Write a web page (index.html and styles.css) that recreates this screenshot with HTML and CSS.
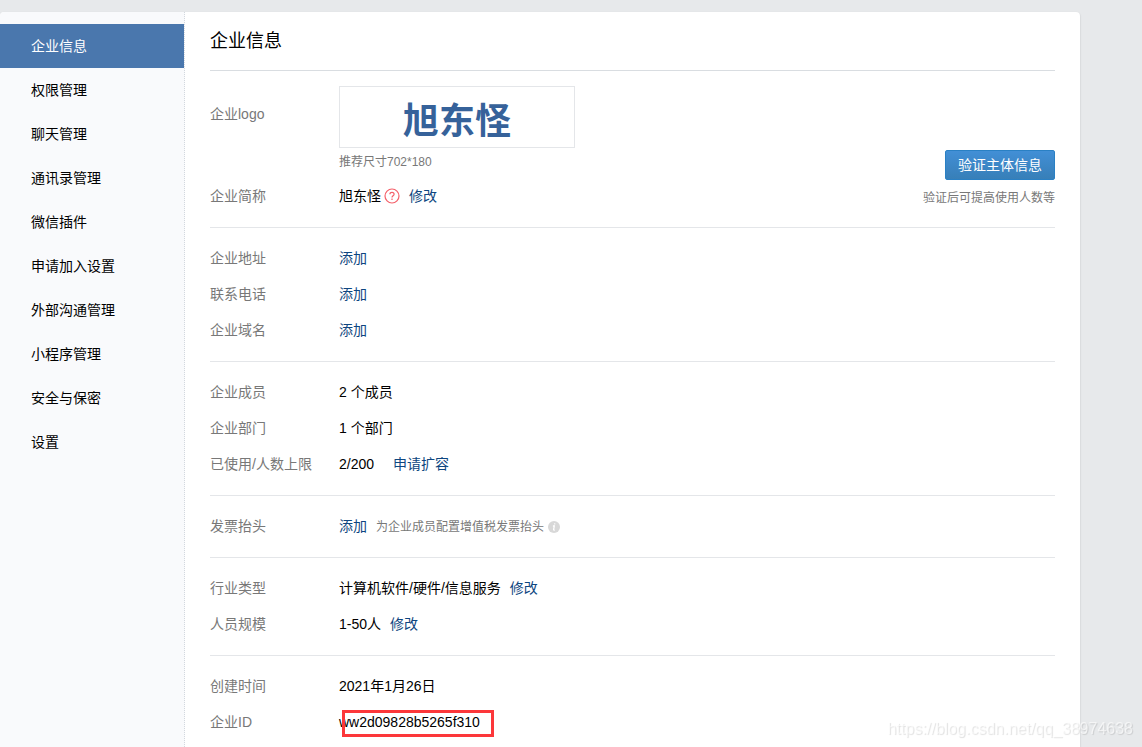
FILE: index.html
```html
<!DOCTYPE html>
<html lang="zh-CN">
<head>
<meta charset="utf-8">
<title>企业信息</title>
<link rel="stylesheet" href="styles.css">
</head>
<body>
<div class="card">
  <nav class="side">
    <a class="side-link side-link-active" href="#">企业信息</a>
    <a class="side-link" href="#">权限管理</a>
    <a class="side-link" href="#">聊天管理</a>
    <a class="side-link" href="#">通讯录管理</a>
    <a class="side-link" href="#">微信插件</a>
    <a class="side-link" href="#">申请加入设置</a>
    <a class="side-link" href="#">外部沟通管理</a>
    <a class="side-link" href="#">小程序管理</a>
    <a class="side-link" href="#">安全与保密</a>
    <a class="side-link" href="#">设置</a>
  </nav>
  <main class="main">
    <h1 class="title">企业信息</h1>
    <section class="group group-profile">
      <dl class="rows">
        <div class="row row-logo">
          <dt class="label">企业logo</dt>
          <dd class="value">
            <div class="logo">旭东怪</div>
            <p class="logo-hint">推荐尺寸702*180</p>
          </dd>
        </div>
        <div class="row">
          <dt class="label">企业简称</dt>
          <dd class="value value-line">
            <span>旭东怪</span>
            <svg class="help" viewBox="0 0 16 16" aria-hidden="true"><circle cx="8" cy="8" r="7"/><path d="M5.9 6.3c0-1.3.9-2 2.1-2s2.1.8 2.1 1.9c0 1.5-2.1 1.6-2.1 3.2"/><path d="M8 10.6v1.3"/></svg>
            <a class="link" href="#">修改</a>
          </dd>
        </div>
      </dl>
      <div class="verify">
        <button class="verify-button" type="button">验证主体信息</button>
        <p class="verify-hint">验证后可提高使用人数等</p>
      </div>
    </section>
    <section class="group">
      <dl class="rows">
        <div class="row"><dt class="label">企业地址</dt><dd class="value"><a class="link" href="#">添加</a></dd></div>
        <div class="row"><dt class="label">联系电话</dt><dd class="value"><a class="link" href="#">添加</a></dd></div>
        <div class="row"><dt class="label">企业域名</dt><dd class="value"><a class="link" href="#">添加</a></dd></div>
      </dl>
    </section>
    <section class="group">
      <dl class="rows">
        <div class="row"><dt class="label">企业成员</dt><dd class="value">2 个成员</dd></div>
        <div class="row"><dt class="label">企业部门</dt><dd class="value">1 个部门</dd></div>
        <div class="row"><dt class="label">已使用/人数上限</dt><dd class="value value-line value-wide"><span>2/200</span><a class="link" href="#">申请扩容</a></dd></div>
      </dl>
    </section>
    <section class="group">
      <dl class="rows">
        <div class="row">
          <dt class="label">发票抬头</dt>
          <dd class="value value-line">
            <a class="link" href="#">添加</a>
            <span class="note">为企业成员配置增值税发票抬头<svg class="info" viewBox="0 0 12 12" aria-hidden="true"><circle cx="6" cy="6" r="6"/><path d="M6.8 2.4l-.2 1M4.9 5h1.4l-.7 3.6c0 .5.5.5 1.1.2"/></svg></span>
          </dd>
        </div>
      </dl>
    </section>
    <section class="group">
      <dl class="rows">
        <div class="row"><dt class="label">行业类型</dt><dd class="value value-line"><span>计算机软件/硬件/信息服务</span><a class="link" href="#">修改</a></dd></div>
        <div class="row"><dt class="label">人员规模</dt><dd class="value value-line"><span>1-50人</span><a class="link" href="#">修改</a></dd></div>
      </dl>
    </section>
    <section class="group group-last">
      <dl class="rows">
        <div class="row"><dt class="label">创建时间</dt><dd class="value">2021年1月26日</dd></div>
        <div class="row"><dt class="label">企业ID</dt><dd class="value"><span class="corp-id">ww2d09828b5265f310</span></dd></div>
      </dl>
    </section>
  </main>
</div>
<div class="watermark">https://blog.csdn.net/qq_38974638</div>
</body>
</html>
```
FILE: styles.css
```css
* {
  box-sizing: border-box;
}

body {
  margin: 0;
  padding: 12px 62px 0 0;
  background: #e7e9eb;
  color: #000;
  font: 14px/36px "Liberation Sans", "Noto Sans CJK SC", sans-serif;
}

h1, p, dl, dd {
  margin: 0;
}

a {
  text-decoration: none;
}

.card {
  display: flex;
  min-height: calc(100vh - 12px);
  background: #fff;
  border-radius: 4px 4px 0 0;
  box-shadow: 0 1px 2px rgba(0, 0, 0, 0.2);
}

.side {
  flex: 0 0 185px;
  padding-top: 12px;
  background: #f9fafc;
  border-right: 1px dotted #d3d8de;
  border-radius: 4px 0 0 0;
}

.side-link {
  display: block;
  padding-left: 31px;
  color: #000;
  line-height: 44px;
}

.side-link-active {
  background: #4a77ad;
  color: #fff;
}

.main {
  flex: 1;
  min-width: 0;
  padding: 0 25px;
}

.title {
  border-bottom: 1px solid #d9dde1;
  font-size: 18px;
  font-weight: 400;
  line-height: 58px;
}

.group {
  display: flex;
  padding: 12px 0 13px;
  border-bottom: 1px solid #e4e6e9;
}

.group-profile {
  padding-top: 15px;
}

.group-last {
  padding-bottom: 0;
  border-bottom: 0;
}

.rows {
  flex: 1;
}

.row {
  display: flex;
}

.label {
  flex: 0 0 129px;
  color: #787878;
}

.row-logo .label {
  line-height: 56px;
}

.value-line {
  display: flex;
  align-items: center;
  gap: 9px;
}

.value-wide {
  gap: 19px;
}

.link {
  color: #0e4680;
}

.logo {
  width: 236px;
  height: 62px;
  padding-top: 5px;
  border: 1px solid #e4e6e9;
  color: #36629a;
  font-size: 36px;
  font-weight: 700;
  line-height: 60px;
  text-align: center;
}

.logo-hint {
  padding-bottom: 2px;
  color: #787878;
  font-size: 12px;
  line-height: 28px;
}

.help {
  width: 16px;
  height: 16px;
  margin-left: -6px;
  fill: none;
  stroke: #f4606a;
  stroke-width: 1.2;
}

.note {
  display: flex;
  align-items: center;
  gap: 4px;
  padding-top: 2px;
  color: #787878;
  font-size: 12px;
  line-height: 34px;
}

.info {
  width: 12px;
  height: 12px;
  fill: #d8d8d8;
}

.info path {
  fill: none;
  stroke: #fff;
  stroke-width: 1.3;
}

.verify {
  display: flex;
  flex-direction: column;
  align-items: flex-end;
  justify-content: flex-end;
}

.verify-button {
  height: 30px;
  padding: 0 12px;
  border: 1px solid #2a80c4;
  border-radius: 2px;
  background: linear-gradient(#428fd6, #377fb8);
  color: #fff;
  font: inherit;
  line-height: 28px;
}

.verify-hint {
  padding-top: 2px;
  color: #787878;
  font-size: 12px;
  line-height: 32px;
}

.corp-id {
  position: relative;
}

.corp-id::after {
  content: "";
  position: absolute;
  inset: -4px -14px -7px 3px;
  border: 3px solid #fc373a;
}

.watermark {
  position: fixed;
  right: 9px;
  bottom: 8px;
  color: rgba(255, 255, 255, 0.6);
  font-size: 16px;
  line-height: 20px;
  text-shadow: 1px 1px 1px rgba(0, 0, 0, 0.12);
}
```
